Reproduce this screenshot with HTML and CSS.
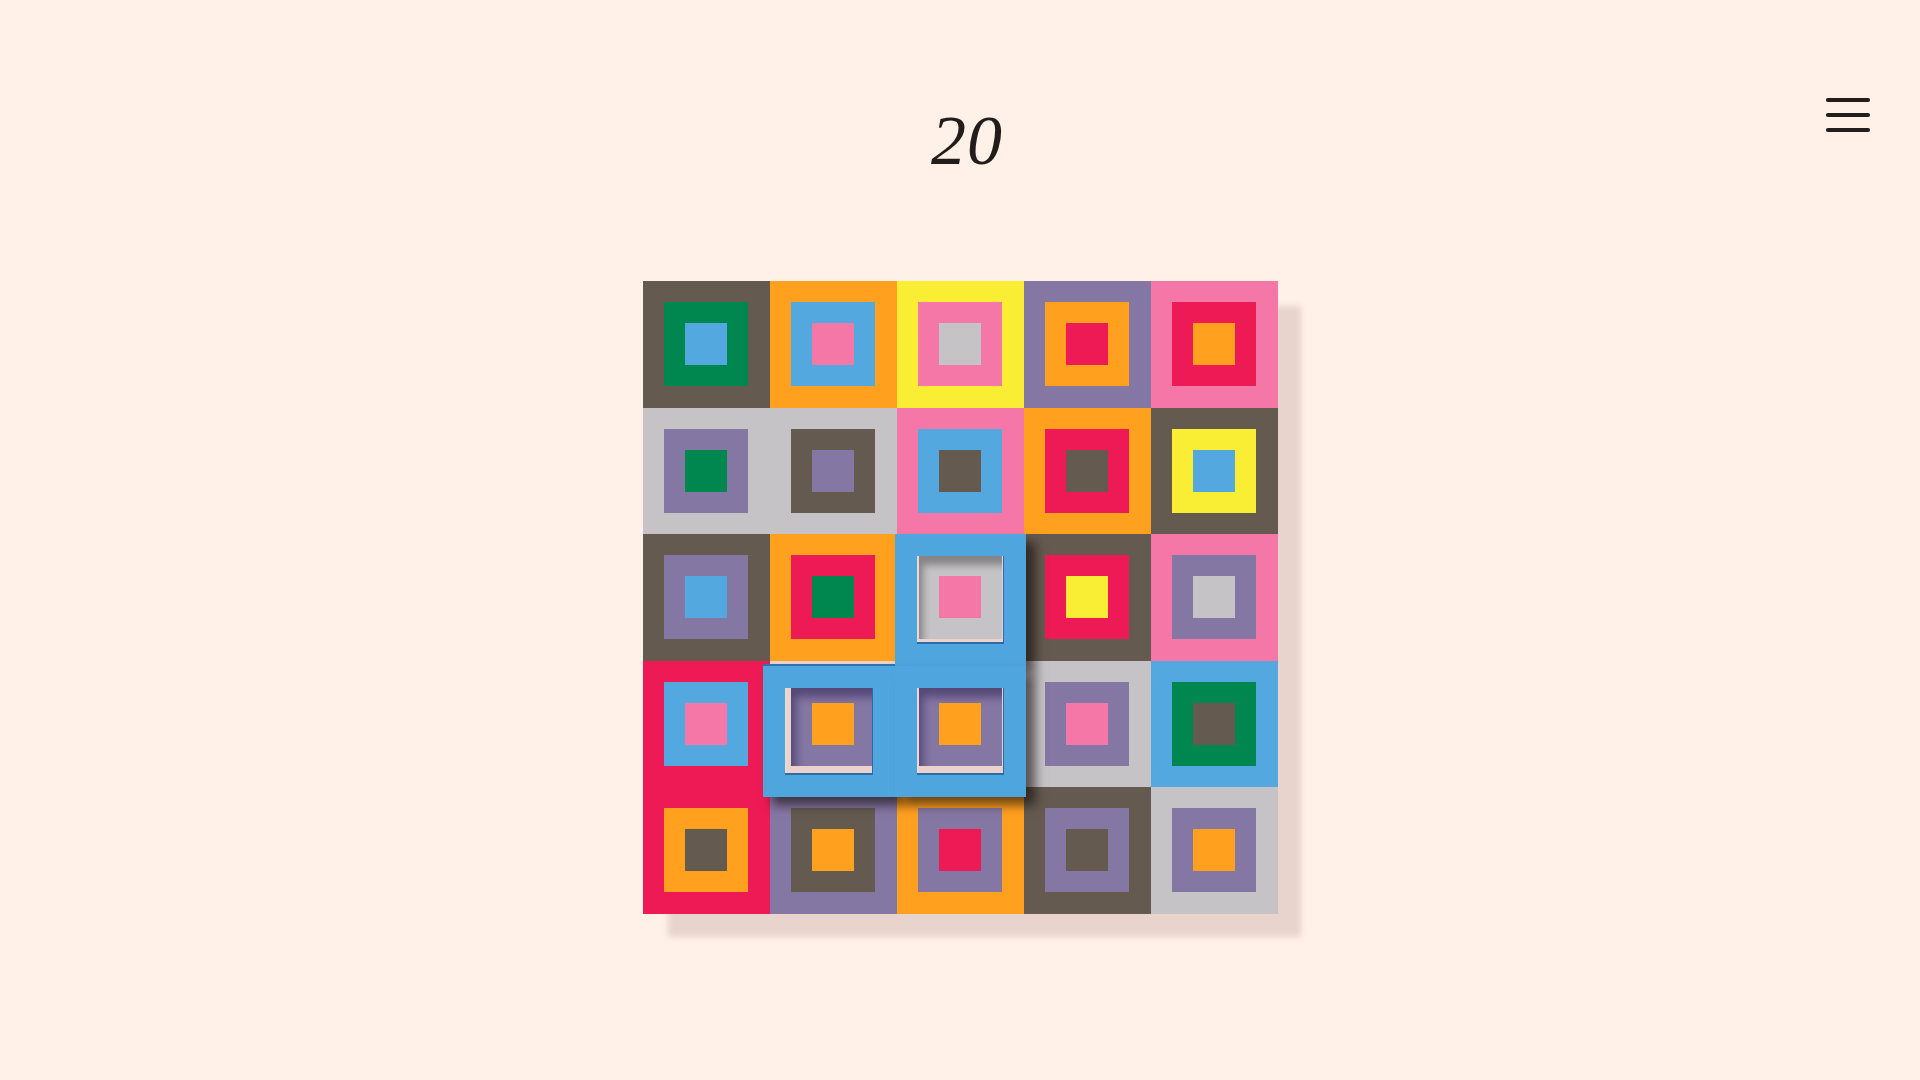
FILE: index.html
```html
<!DOCTYPE html>
<html lang="en">
<head>
<meta charset="utf-8">
<title>20</title>
<link rel="stylesheet" href="styles.css">
</head>
<body>
<header class="top">
  <div class="score">20</div>
  <button class="menu" aria-label="Menu">
    <svg width="46" height="36" viewBox="0 0 46 36">
      <path d="M3 3H43M3 18H43M3 33H43" stroke="#231e1b" stroke-width="4.2" stroke-linecap="round" fill="none"/>
    </svg>
  </button>
</header>
<main class="stage">
  <div class="board">
    <div class="grid">
      <div class="cell brown"><div class="mid green"><div class="core blue"></div></div></div>
      <div class="cell orange"><div class="mid blue"><div class="core pink"></div></div></div>
      <div class="cell yellow"><div class="mid pink"><div class="core gray"></div></div></div>
      <div class="cell purple"><div class="mid orange"><div class="core red"></div></div></div>
      <div class="cell pink"><div class="mid red"><div class="core orange"></div></div></div>

      <div class="cell gray"><div class="mid purple"><div class="core green"></div></div></div>
      <div class="cell gray"><div class="mid brown"><div class="core purple"></div></div></div>
      <div class="cell pink"><div class="mid blue"><div class="core brown"></div></div></div>
      <div class="cell orange"><div class="mid red"><div class="core brown"></div></div></div>
      <div class="cell brown"><div class="mid yellow"><div class="core blue"></div></div></div>

      <div class="cell brown"><div class="mid purple"><div class="core blue"></div></div></div>
      <div class="cell orange"><div class="mid red"><div class="core green"></div></div></div>
      <div class="cell slot"><div class="mid gray sunk-a"><div class="core pink"></div></div></div>
      <div class="cell brown"><div class="mid red"><div class="core yellow"></div></div></div>
      <div class="cell pink"><div class="mid purple"><div class="core gray"></div></div></div>

      <div class="cell red"><div class="mid blue"><div class="core pink"></div></div></div>
      <div class="cell slot"><div class="mid purple sunk-b"><div class="core orange"></div></div></div>
      <div class="cell slot"><div class="mid purple sunk-b"><div class="core orange"></div></div></div>
      <div class="cell gray"><div class="mid purple"><div class="core pink"></div></div></div>
      <div class="cell blue"><div class="mid green"><div class="core brown"></div></div></div>

      <div class="cell red"><div class="mid orange"><div class="core brown"></div></div></div>
      <div class="cell purple"><div class="mid brown"><div class="core orange"></div></div></div>
      <div class="cell orange"><div class="mid purple"><div class="core red"></div></div></div>
      <div class="cell brown"><div class="mid purple"><div class="core brown"></div></div></div>
      <div class="cell gray"><div class="mid purple"><div class="core orange"></div></div></div>
    </div>
    <div class="piece">
      <div class="pc pc-tr"></div>
      <div class="pc pc-bl"></div>
      <div class="pc pc-br"></div>
    </div>
  </div>
</main>
</body>
</html>
```
FILE: styles.css
```css
html, body {
  margin: 0;
  padding: 0;
}
body {
  background: #fff1e8;
  min-height: 100vh;
  overflow: hidden;
  font-family: "Liberation Serif", serif;
}
.top {
  display: grid;
  grid-template-columns: 1fr auto 1fr;
  align-items: start;
  padding-top: 97px;
}
.score {
  grid-column: 2;
  margin-top: 9px;
  padding-left: 14px;
  font-family: "Liberation Serif", "DejaVu Serif", serif;
  font-style: italic;
  font-size: 70px;
  line-height: 1;
  color: #221d1a;
  letter-spacing: 1px;
}
.menu {
  grid-column: 3;
  justify-self: end;
  margin-right: 49px;
  padding: 0;
  border: 0;
  background: none;
  width: 46px;
  height: 36px;
}
.menu svg {
  display: block;
}
.stage {
  display: flex;
  justify-content: center;
  padding-top: 105px;
}
.board {
  position: relative;
  width: 635px;
}
.grid {
  display: grid;
  grid-template-columns: repeat(5, 127px);
  grid-template-rows: repeat(5, 126.5px);
  box-shadow: 24px 24px 6px -1px #e9d4cd;
}
.cell {
  box-sizing: border-box;
  padding: 21.2px;
}
.mid {
  box-sizing: border-box;
  width: 100%;
  height: 100%;
  padding: 21.1px;
}
.core {
  width: 100%;
  height: 100%;
}
.brown { background: #645a50; }
.green { background: #00874f; }
.blue { background: #52a8df; }
.orange { background: #ffa01f; }
.pink { background: #f577a8; }
.yellow { background: #faee35; }
.purple { background: #8577a3; }
.gray { background: #c5c3c6; }
.red { background: #ee1a55; }
.slot { background: #e9d3cc; }

.sunk-a {
  box-shadow: inset 7px 12px 7px -2px rgba(60, 55, 60, 0.45);
}
.sunk-b {
  box-shadow: inset 7px 17px 8px -2px rgba(40, 25, 75, 0.5);
}

.piece {
  position: absolute;
  left: 120.5px;
  top: 253px;
  display: grid;
  grid-template-columns: repeat(2, 131.5px);
  grid-template-rows: repeat(2, 131.5px);
}
.pc {
  box-sizing: border-box;
  border: 22.5px solid #4fa6de;
  box-shadow: 9px 8px 10px rgba(15, 8, 5, 0.6), inset -1px -2px 0 #2c6aa8, inset 2px 0 0 #ecd8d1;
}
.pc-tr {
  grid-column: 2;
  grid-row: 1;
}
.pc-bl {
  grid-column: 1;
  grid-row: 2;
  box-shadow: 0 -2px 0 #3370ae, 9px 8px 10px rgba(15, 8, 5, 0.6), inset -1px -2px 0 #2c6aa8, inset 2px 0 0 #ecd8d1;
}
.pc-br {
  grid-column: 2;
  grid-row: 2;
}
```
